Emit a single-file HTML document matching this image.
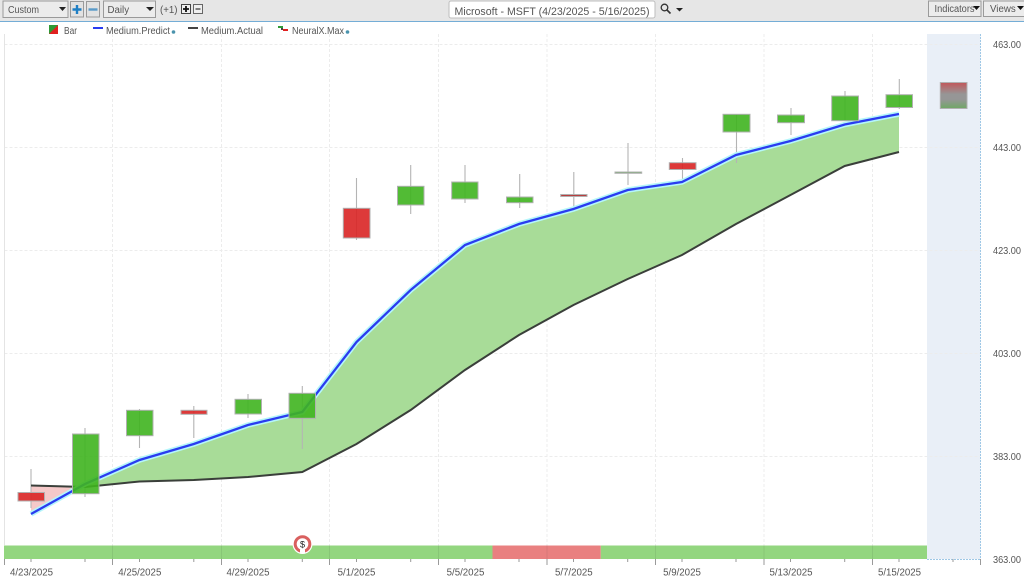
<!DOCTYPE html>
<html lang="en">
<head>
<meta charset="utf-8">
<title>Microsoft - MSFT</title>
<style>
html,body{margin:0;padding:0;background:#fff}
body{width:1024px;height:582px;overflow:hidden;position:relative}
svg{position:absolute;left:0;top:0;display:block;filter:blur(0.35px)}
text{font-family:"Liberation Sans",sans-serif;font-size:9.7px;fill:#555}
</style>
</head>
<body>
<svg width="1024" height="582" viewBox="0 0 1024 582" xmlns="http://www.w3.org/2000/svg">
<defs>
<linearGradient id="fc" x1="0" y1="0" x2="0" y2="1">
<stop offset="0" stop-color="#c2565a"/>
<stop offset="0.45" stop-color="#969696"/>
<stop offset="0.65" stop-color="#969696"/>
<stop offset="1" stop-color="#6fa765"/>
</linearGradient>
</defs>
<rect width="1024" height="582" fill="#fff"/>

<!-- toolbar -->
<rect width="1024" height="21" fill="#e6e6e6"/>
<rect y="21" width="1024" height="1" fill="#74add6"/>
<rect x="3" y="1" width="65" height="16.500" fill="#ececec" stroke="#9a9a9a"/>
<text x="8" y="13" textLength="31" lengthAdjust="spacingAndGlyphs">Custom</text>
<path d="M59 7h7l-3.500 4z" fill="#222"/>
<rect x="70.500" y="1.500" width="13" height="15.500" fill="#e2e2e2" stroke="#9a9a9a"/>
<path d="M77 5v9M72.500 9.500h9" stroke="#1f7fc4" stroke-width="2.400"/>
<rect x="86.500" y="1.500" width="13" height="15.500" fill="#e2e2e2" stroke="#9a9a9a"/>
<path d="M88.500 9.500h9" stroke="#5a9ac8" stroke-width="2.400"/>
<rect x="103.500" y="1" width="52" height="16.500" fill="#ececec" stroke="#9a9a9a"/>
<text x="107.500" y="13">Daily</text>
<path d="M146 7h8l-4 4z" fill="#222"/>
<text x="160" y="13">(+1)</text>
<rect x="181.500" y="4.500" width="9" height="9" fill="#efefef" stroke="#444"/>
<path d="M186 6v6M183 9h6" stroke="#111" stroke-width="1.800"/>
<rect x="193.500" y="4.500" width="9" height="9" fill="#efefef" stroke="#666"/>
<path d="M195.500 9h5" stroke="#333" stroke-width="1.200"/>

<rect x="449" y="1" width="206" height="17" rx="2" fill="#fff" stroke="#bdbdbd"/>
<text x="454.500" y="15" style="font-size:11px" textLength="195" lengthAdjust="spacingAndGlyphs">Microsoft - MSFT (4/23/2025 - 5/16/2025)</text>
<circle cx="664.500" cy="7.500" r="3.300" fill="none" stroke="#333" stroke-width="1.300"/>
<path d="M667 10l3.500 3.500" stroke="#333" stroke-width="1.600"/>
<path d="M676 8h7l-3.500 3.500z" fill="#222"/>

<rect x="928.500" y="1" width="52.500" height="15.500" fill="#ececec" stroke="#9a9a9a"/>
<text x="934.500" y="12" textLength="40" lengthAdjust="spacingAndGlyphs">Indicators</text>
<path d="M973 6h7l-3.500 4z" fill="#111"/>
<rect x="983.500" y="1" width="41" height="15.500" fill="#ececec" stroke="#9a9a9a"/>
<text x="990" y="12">Views</text>
<path d="M1017 6h7l-3.500 4z" fill="#111"/>

<!-- legend -->
<path d="M49 25h9v9h-9z" fill="#e02020"/>
<path d="M49 34v-9h9z" fill="#2f9a35"/>
<text x="64" y="34" textLength="13" lengthAdjust="spacingAndGlyphs">Bar</text>
<rect x="93" y="27" width="10" height="2" fill="#2a3cf0"/>
<text x="106" y="34" textLength="64" lengthAdjust="spacingAndGlyphs">Medium.Predict</text>
<circle cx="173.500" cy="32" r="1.800" fill="#4a93ad"/>
<rect x="188" y="27" width="10" height="2" fill="#444"/>
<text x="201" y="34" textLength="62" lengthAdjust="spacingAndGlyphs">Medium.Actual</text>
<path d="M278 26h5v2h-5z" fill="#2f9a35"/>
<path d="M283 29h5v2h-5z" fill="#e02020"/>
<path d="M281 28h2v2h-2z" fill="#444"/>
<text x="292" y="34" textLength="52" lengthAdjust="spacingAndGlyphs">NeuralX.Max</text>
<circle cx="347.500" cy="32" r="1.800" fill="#4a93ad"/>

<!-- forecast region -->
<rect x="927" y="34" width="53.500" height="525" fill="#e9eff7"/>
<path d="M980.500 34V559M927 559.500H980.500" stroke="#9fc8e6" stroke-width="1" stroke-dasharray="2 1"/>

<!-- grid -->
<g stroke="#ececec" stroke-width="1" stroke-dasharray="3 2" fill="none">
<path d="M4.500 44.500H980M4.500 147.500H980M4.500 250.500H980M4.500 353.500H980M4.500 456.500H980"/>
<path d="M112.500 34V559M221.500 34V559M329.500 34V559M438.500 34V559M547 34V559M655.500 34V559M764 34V559M872.500 34V559"/>
</g>
<path d="M4.500 34V545" stroke="#e4e4e4" stroke-width="1"/>

<!-- y labels -->
<text x="993" y="48" textLength="28" lengthAdjust="spacingAndGlyphs">463.00</text>
<text x="993" y="151" textLength="28" lengthAdjust="spacingAndGlyphs">443.00</text>
<text x="993" y="254" textLength="28" lengthAdjust="spacingAndGlyphs">423.00</text>
<text x="993" y="357" textLength="28" lengthAdjust="spacingAndGlyphs">403.00</text>
<text x="993" y="460" textLength="28" lengthAdjust="spacingAndGlyphs">383.00</text>
<text x="993" y="563" textLength="28" lengthAdjust="spacingAndGlyphs">363.00</text>

<!-- filled area -->
<path d="M31 514L80 486.900L31 485.500Z" fill="#f5c9c9"/>
<path d="M80 486.900L85 484L139.500 460L193.800 444L248 425L302.300 412L356.500 342L410.700 290L465 245L519 224L573.500 209L627.700 190L682 182L736 155L790.500 141L844.700 124.500L899 114L899 152L844.700 166L790.500 195L736 224L682 255L627.700 279L573.500 305L519 335L465 370L410.700 410L356.500 444L302.300 472L248 477L193.800 480L139.500 481.500L85 487Z" fill="#a8dc98"/>

<!-- wicks -->
<g stroke="#b4b4b4" stroke-width="1.100" fill="none">
<path d="M31 469V508M85 428V497M139.500 409V448M193.800 406V438M248 394V418M302.300 386V449M356.500 178V240M410.700 165V214M465 165V203M519.700 174V208M573.800 172V210M628 143V185M682.500 158V183M736.500 114V163M791 108V135M845 91V121M899.300 79V109"/>
</g>

<!-- lines under candles -->
<polyline points="31,485.500 85,487 139.500,481.500 193.800,480 248,477 302.300,472 356.500,444 410.700,410 465,370 519,335 573.500,305 627.700,279 682,255 736,224 790.500,195 844.700,166 899,152" fill="none" stroke="#3a3f3a" stroke-width="2"/>
<polyline points="31,514 85,484 139.500,460 193.800,444 248,425 302.300,412 356.500,342 410.700,290 465,245 519,224 573.500,209 627.700,190 682,182 736,155 790.500,141 844.700,124.500 899,114" fill="none" stroke="#b4f6fa" stroke-width="5.500"/>
<polyline points="31,514 85,484 139.500,460 193.800,444 248,425 302.300,412 356.500,342 410.700,290 465,245 519,224 573.500,209 627.700,190 682,182 736,155 790.500,141 844.700,124.500 899,114" fill="none" stroke="#2a3cf0" stroke-width="2.300"/>

<!-- candles -->
<g stroke="#b0b0b0" stroke-width="1" fill-opacity="0.9">
<rect x="18" y="492.500" width="26.500" height="8.500" fill="#d92525"/>
<rect x="72.500" y="434" width="26.500" height="59.700" fill="#3fb41f"/>
<rect x="126.500" y="410.300" width="26.500" height="25.400" fill="#3fb41f"/>
<rect x="181" y="410.300" width="26" height="4" fill="#d92525"/>
<rect x="235" y="399.300" width="26.500" height="14.700" fill="#3fb41f"/>
<rect x="289" y="393.300" width="26.500" height="25" fill="#3fb41f"/>
<rect x="343.300" y="208.300" width="26.700" height="29.700" fill="#d92525"/>
<rect x="397.500" y="186.300" width="26.500" height="18.700" fill="#3fb41f"/>
<rect x="451.700" y="182" width="26.300" height="17" fill="#3fb41f"/>
<rect x="506.500" y="197" width="26.500" height="5.700" fill="#3fb41f"/>
<rect x="560.700" y="194.500" width="26.300" height="2" fill="#b02a2a"/>
<rect x="615" y="172" width="26.700" height="1.300" fill="#4a9c3a"/>
<rect x="669.300" y="162.700" width="26.700" height="6.800" fill="#d92525"/>
<rect x="723" y="114.300" width="27" height="17.700" fill="#3fb41f"/>
<rect x="777.500" y="115" width="27" height="7.700" fill="#3fb41f"/>
<rect x="831.700" y="96" width="26.800" height="24.700" fill="#3fb41f"/>
<rect x="886" y="94.700" width="26.500" height="12.800" fill="#3fb41f"/>
<rect x="940.300" y="82.500" width="26.700" height="26" fill="url(#fc)" fill-opacity="1"/>
</g>

<!-- bottom band -->
<rect x="4" y="545.500" width="488.500" height="13.500" fill="#93d67f"/>
<rect x="492.500" y="545.500" width="108.300" height="13.500" fill="#e98080"/>
<rect x="600.800" y="545.500" width="326.200" height="13.500" fill="#93d67f"/>
<path d="M112.500 545.500V559M221.500 545.500V559M329.500 545.500V559M438.500 545.500V559M547 545.500V559M764 545.500V559M872.500 545.500V559M655.500 545.500V559" stroke="#000" stroke-opacity="0.07"/>

<!-- signal -->
<circle cx="302.500" cy="544" r="10" fill="#fff"/>
<circle cx="302.500" cy="544" r="7.300" fill="#fff" stroke="#d9605f" stroke-width="3"/>
<text x="302.500" y="547.500" text-anchor="middle" style="font-size:9px;fill:#222">$</text>
<path d="M300.500 553v-3h4v3" fill="#fff" stroke="#fff"/>

<!-- ticks -->
<path d="M4.500 559V565M112.500 559V565M221.500 559V565M329.500 559V565M438.500 559V565M547 559V565M655.500 559V565M764 559V565M872.500 559V565M980.500 559V565" stroke="#9a9a9a"/>
<path d="M31 559V562M85 559V562M139.500 559V562M193.800 559V562M248 559V562M302.300 559V562M356.500 559V562M410.700 559V562M465 559V562M519 559V562M573.500 559V562M627.700 559V562M682 559V562M736 559V562M790.500 559V562M844.700 559V562M899 559V562M953 559V562" stroke="#9a9a9a"/>

<!-- x labels -->
<g text-anchor="middle">
<text x="31.500" y="575.500">4/23/2025</text>
<text x="139.800" y="575.500">4/25/2025</text>
<text x="248" y="575.500">4/29/2025</text>
<text x="356.500" y="575.500">5/1/2025</text>
<text x="465.500" y="575.500">5/5/2025</text>
<text x="573.800" y="575.500">5/7/2025</text>
<text x="682" y="575.500">5/9/2025</text>
<text x="791" y="575.500">5/13/2025</text>
<text x="899.500" y="575.500">5/15/2025</text>
</g>
</svg>
</body>
</html>
